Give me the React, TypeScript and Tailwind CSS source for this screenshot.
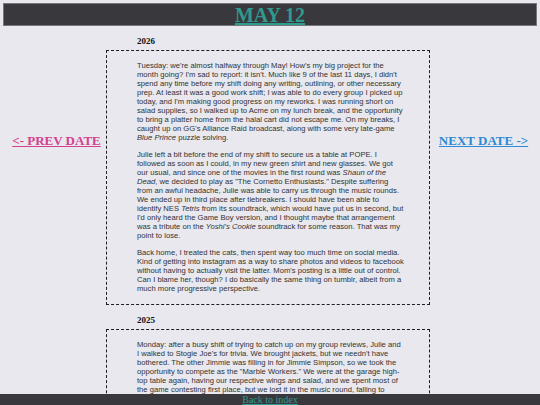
import React from "react";

const sans = "font-['Liberation_Sans',Arial,sans-serif]";

function Entry({ year, children }: { year: string; children: React.ReactNode }) {
  return (
    <section className="pt-[10px]">
      <h2 className="ml-[31px] mb-[4px] text-[9px] leading-[10px] font-bold text-[#111]">{year}</h2>
      <div className={`border border-dashed border-[#1e1e1e] pl-[30px] pr-[25px] pt-[10px] pb-[11px] ${sans} text-[7.65px] leading-[9px] text-[#333] flex flex-col gap-[8px]`}>
        {children}
      </div>
    </section>
  );
}

export default function App() {
  return (
    <div className="min-h-screen bg-[#e8e8ee] font-['Liberation_Serif','Times_New_Roman',serif] pb-[20px]">
      <div className="pt-[3px] px-[3px]">
        <header className="h-[23px] border border-[#77767b] bg-[#39383d] flex items-center justify-center">
          <h1 className="text-[20px] leading-[22px] font-bold text-[#2f9a8e] underline">MAY 12</h1>
        </header>
      </div>
      <div className="flex">
        <aside className="w-[106px] shrink-0 pl-[7px] pt-[102px] text-center">
          <a href="#" className="text-[13px] leading-[15px] font-bold text-[#d4408c] underline whitespace-nowrap">&lt;- PREV DATE</a>
        </aside>
        <main className="w-[324px] shrink-0">
          <Entry year="2026">
            <p>
              Tuesday: we're almost halfway through May! How's my big project for the month going? I'm sad to report: it isn't. Much like 9 of the last 11 days, I didn't spend any time before my shift doing any writing, outlining, or other necessary prep. At least it was a good work shift; I was able to do every group I picked up today, and I'm making good progress on my reworks. I was running short on salad supplies, so I walked up to Acme on my lunch break, and the opportunity to bring a platter home from the halal cart did not escape me. On my breaks, I caught up on GG's Alliance Raid broadcast, along with some very late-game <i>Blue Prince</i> puzzle solving.
            </p>
            <p>
              Julie left a bit before the end of my shift to secure us a table at POPE. I followed as soon as I could, in my new green shirt and new glasses. We got our usual, and since one of the movies in the first round was <i>Shaun of the Dead</i>, we decided to play as "The Cornetto Enthusiasts." Despite suffering from an awful headache, Julie was able to carry us through the music rounds. We ended up in third place after tiebreakers. I should have been able to identify NES <i>Tetris</i> from its soundtrack, which would have put us in second, but I'd only heard the Game Boy version, and I thought maybe that arrangement was a tribute on the <i>Yoshi's Cookie</i> soundtrack for some reason. That was my point to lose.
            </p>
            <p>
              Back home, I treated the cats, then spent way too much time on social media. Kind of getting into instagram as a way to share photos and videos to facebook without having to actually visit the latter. Mom's posting is a little out of control. Can I blame her, though? I do basically the same thing on tumblr, albeit from a much more progressive perspective.
            </p>
          </Entry>
          <Entry year="2025">
            <p>
              Monday: after a busy shift of trying to catch up on my group reviews, Julie and I walked to Stogie Joe's for trivia. We brought jackets, but we needn't have bothered. The other Jimmie was filling in for Jimmie Simpson, so we took the opportunity to compete as the "Marble Workers." We were at the garage high-top table again, having our respective wings and salad, and we spent most of the game contesting first place, but we lost it in the music round, falling to fourth place in the end. We still had a lot of fun, though, and we walked home under a clear sky.
            </p>
          </Entry>
        </main>
        <aside className="flex-1 pr-[3px] pt-[102px] text-center">
          <a href="#" className="text-[13px] leading-[15px] font-bold text-[#2e8ad2] underline whitespace-nowrap">NEXT DATE -&gt;</a>
        </aside>
      </div>
      <footer className="fixed bottom-0 inset-x-0 h-[11px] bg-[#39383d] text-center">
        <a href="#" className="text-[10px] leading-[11px] text-[#2f9a8e] underline block">Back to index</a>
      </footer>
    </div>
  );
}
